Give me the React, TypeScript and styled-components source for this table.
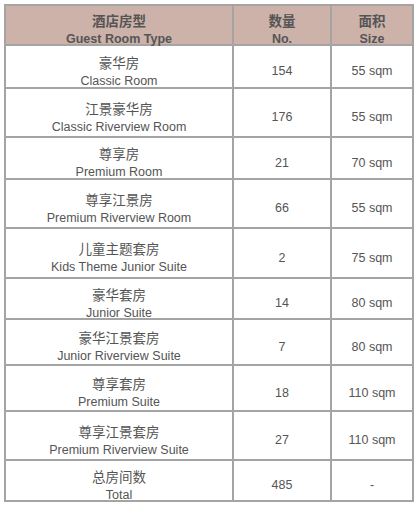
import React from "react";
import styled, { createGlobalStyle } from "styled-components";

const Global = createGlobalStyle`
  html, body { margin: 0; padding: 0; background: #ffffff; }
  body { font-family: "Liberation Sans", Arial, "Noto Sans CJK SC", sans-serif; }
  * { box-sizing: border-box; }
`;

const Page = styled.div`
  padding: 4px 0 0 4px;
`;

const Table = styled.div`
  width: 410px;
  border-top: 2px solid #a4a4a4;
  border-left: 2px solid #a4a4a4;
  display: flex;
  flex-direction: column;
`;

const Row = styled.div<{ $h: number; $head?: boolean }>`
  display: grid;
  grid-template-columns: 228px 98px 82px;
  grid-template-rows: minmax(0, 1fr);
  height: ${(p) => p.$h}px;
  flex: none;
  background: ${(p) => (p.$head ? "#cdb2aa" : "#ffffff")};
  font-weight: ${(p) => (p.$head ? 700 : 400)};
`;

const Cell = styled.div<{ $head?: boolean }>`
  min-height: 0;
  border-right: 2px solid #a4a4a4;
  border-bottom: 2px solid #a4a4a4;
  padding-top: ${(p) => (p.$head ? 9 : 10)}px;
  display: flex;
  flex-direction: column;
  align-items: center;
  justify-content: center;
  color: #555555;
  font-size: 12.5px;
  line-height: ${(p) => (p.$head ? 18.5 : 19)}px;
  text-align: center;
  white-space: nowrap;
`;

const Cn = styled.span`
  font-family: "Noto Sans CJK SC", "Liberation Sans", sans-serif;
  font-size: 13.5px;
  flex: none;
`;

const En = styled.span`
  font-family: "Liberation Sans", Arial, sans-serif;
  font-size: 12.5px;
  flex: none;
`;

type Room = { cn: string; en: string; no: string; size: string; h: number };

const rooms: Room[] = [
  { cn: "豪华房", en: "Classic Room", no: "154", size: "55 sqm", h: 43 },
  { cn: "江景豪华房", en: "Classic Riverview Room", no: "176", size: "55 sqm", h: 49 },
  { cn: "尊享房", en: "Premium Room", no: "21", size: "70 sqm", h: 42 },
  { cn: "尊享江景房", en: "Premium Riverview Room", no: "66", size: "55 sqm", h: 49 },
  { cn: "儿童主题套房", en: "Kids Theme Junior Suite", no: "2", size: "75 sqm", h: 50 },
  { cn: "豪华套房", en: "Junior Suite", no: "14", size: "80 sqm", h: 41 },
  { cn: "豪华江景套房", en: "Junior Riverview Suite", no: "7", size: "80 sqm", h: 46 },
  { cn: "尊享套房", en: "Premium Suite", no: "18", size: "110 sqm", h: 46 },
  { cn: "尊享江景套房", en: "Premium Riverview Suite", no: "27", size: "110 sqm", h: 49 },
  { cn: "总房间数", en: "Total", no: "485", size: "-", h: 41 },
];

export default function App() {
  return (
    <Page>
      <Global />
      <Table>
        <Row $h={40} $head>
          <Cell $head>
            <Cn>酒店房型</Cn>
            <En>Guest Room Type</En>
          </Cell>
          <Cell $head>
            <Cn>数量</Cn>
            <En>No.</En>
          </Cell>
          <Cell $head>
            <Cn>面积</Cn>
            <En>Size</En>
          </Cell>
        </Row>
        {rooms.map((r) => (
          <Row key={r.en} $h={r.h}>
            <Cell>
              <Cn>{r.cn}</Cn>
              <En>{r.en}</En>
            </Cell>
            <Cell>
              <En>{r.no}</En>
            </Cell>
            <Cell>
              <En>{r.size}</En>
            </Cell>
          </Row>
        ))}
      </Table>
    </Page>
  );
}
